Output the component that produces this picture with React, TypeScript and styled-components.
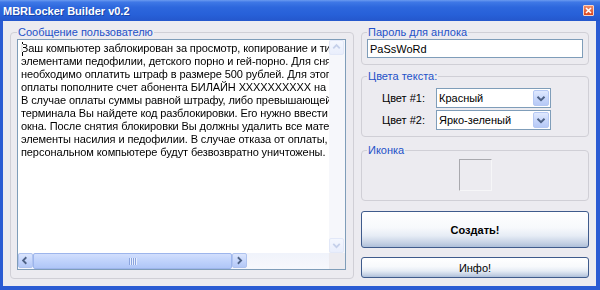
import React from 'react';
import styled, { createGlobalStyle } from 'styled-components';

const messageLines = [
    'Ваш компьютер заблокирован за просмотр, копирование и тиражирование видеоматериалов, содержащих',
    'элементами педофилии, детского порно и гей-порно. Для снятия блокировки Вам',
    'необходимо оплатить штраф в размере 500 рублей. Для этого в ближайшем терминале',
    'оплаты пополните счет абонента БИЛАЙН XXXXXXXXXX на указанную сумму.',
    'В случае оплаты суммы равной штрафу, либо превышающей ее, на фискальном чеке',
    'терминала Вы найдете код разблокировки. Его нужно ввести в специальное поле',
    'окна. После снятия блокировки Вы должны удалить все материалы, содержащие',
    'элементы насилия и педофилии. В случае отказа от оплаты, все данные на Вашем',
    'персональном компьютере будут безвозвратно уничтожены.',
];

const GlobalStyle = createGlobalStyle`
    html, body {
        margin: 0;
        padding: 0;
        background: #ffffff;
    }
    body {
        font-family: "Liberation Sans", Arial, sans-serif;
        font-size: 11px;
    }
    * {
        box-sizing: border-box;
    }
`;

type Dir = 'left' | 'right' | 'up' | 'down';

const arrowPoints: Record<Dir, string> = {
    left: '9,4 5,8 9,12',
    right: '6,4 10,8 6,12',
    up: '4,9 8,5 12,9',
    down: '4,6 8,10 12,6',
};

const Arrow: React.FC<{ dir: Dir; color: string }> = ({ dir, color }) => (
    <svg width="15" height="15" viewBox="0 0 16 16">
        <polyline points={arrowPoints[dir]} fill="none" stroke={color} strokeWidth="2.2" strokeLinejoin="miter" />
    </svg>
);

const App: React.FC = () => {
    return (
        <>
            <GlobalStyle />
            <Window>
                <TitleBar>
                    <Title>MBRLocker Builder v0.2</Title>
                    <CloseButton>
                        <svg width="7" height="7" viewBox="0 0 7 7">
                            <path d="M1 1 L6 6 M6 1 L1 6" stroke="#ffffff" strokeWidth="1.6" />
                        </svg>
                    </CloseButton>
                </TitleBar>
                <Frame>
                    <Body>
                        <MessageGroup>
                            <Legend>Сообщение пользователю</Legend>
                            <TextBox>
                                <TextContent>
                                    <Caret />
                                    {messageLines.join('\n')}
                                </TextContent>
                                <VScroll>
                                    <ScrollButton $disabled>
                                        <Arrow dir="up" color="#C5D0EA" />
                                    </ScrollButton>
                                    <ScrollButton $disabled>
                                        <Arrow dir="down" color="#C5D0EA" />
                                    </ScrollButton>
                                </VScroll>
                                <HScroll>
                                    <ScrollButton>
                                        <Arrow dir="left" color="#4D6185" />
                                    </ScrollButton>
                                    <Thumb>
                                        <Grip />
                                    </Thumb>
                                    <ScrollButton>
                                        <Arrow dir="right" color="#4D6185" />
                                    </ScrollButton>
                                </HScroll>
                                <ScrollCorner />
                            </TextBox>
                        </MessageGroup>
                        <SideColumn>
                            <Group $pad="0 5px 6px 5px">
                                <Legend>Пароль для анлока</Legend>
                                <TextInput defaultValue="PaSsWoRd" />
                            </Group>
                            <Group $pad="5px 5px 6px 5px" $mt={5}>
                                <Legend>Цвета текста:</Legend>
                                <ColorRow>
                                    <RowLabel>Цвет #1:</RowLabel>
                                    <Combo>
                                        <ComboText>Красный</ComboText>
                                        <ComboButton>
                                            <Arrow dir="down" color="#4D6185" />
                                        </ComboButton>
                                    </Combo>
                                </ColorRow>
                                <ColorRow $mt={2}>
                                    <RowLabel>Цвет #2:</RowLabel>
                                    <Combo>
                                        <ComboText>Ярко-зеленый</ComboText>
                                        <ComboButton>
                                            <Arrow dir="down" color="#4D6185" />
                                        </ComboButton>
                                    </Combo>
                                </ColorRow>
                            </Group>
                            <Group $pad="2px 5px 9px 5px" $mt={7}>
                                <Legend>Иконка</Legend>
                                <IconSlot />
                            </Group>
                            <ActionButton $h={37} $mt={10} $bold>Создать!</ActionButton>
                            <ActionButton $h={21} $mt={9}>Инфо!</ActionButton>
                        </SideColumn>
                    </Body>
                </Frame>
            </Window>
        </>
    );
};

const Window = styled.div`
    width: 600px;
    height: 290px;
    display: flex;
    flex-direction: column;
    overflow: hidden;
`;

const TitleBar = styled.div`
    flex: none;
    height: 21px;
    display: flex;
    align-items: center;
    justify-content: space-between;
    padding: 0 6px 0 3px;
    background: linear-gradient(to bottom, #6b9bf0 0%, #3f78e6 10%, #2d67dd 35%, #2760d8 70%, #2457cc 100%);
`;

const Title = styled.span`
    color: #ffffff;
    font-weight: bold;
    font-size: 11px;
    text-shadow: 1px 1px 0 #1a44a8;
`;

const CloseButton = styled.div`
    width: 11px;
    height: 11px;
    display: flex;
    align-items: center;
    justify-content: center;
    background: linear-gradient(to bottom, #ef8a68, #d9461f);
    border: 1px solid #f6d2c4;
    border-radius: 1px;
`;

const Frame = styled.div`
    flex: 1;
    min-height: 0;
    display: flex;
    background: #ECEBF0;
    border-left: 3px solid #2A5BD3;
    border-right: 4px solid #2A5BD3;
    border-bottom: 4px solid #2A5BD3;
`;

const Body = styled.div`
    flex: 1;
    display: flex;
    gap: 7px;
    padding: 5px 7px 7px 7px;
`;

const Group = styled.fieldset<{ $pad: string; $mt?: number }>`
    margin: ${p => p.$mt ?? 0}px 0 0 0;
    min-width: 0;
    border: 1px solid #D0CFD6;
    border-radius: 4px;
    padding: ${p => p.$pad};
`;

const MessageGroup = styled(Group).attrs({ $pad: '0 7px 8px 6px' })`
    width: 344px;
    flex: none;
    display: flex;
    flex-direction: column;
`;

const Legend = styled.legend`
    padding: 0 1px;
    color: #2452C8;
    font-size: 11px;
    line-height: 13px;
`;

const TextBox = styled.div`
    flex: 1;
    min-height: 0;
    display: grid;
    grid-template-columns: 1fr 16px;
    grid-template-rows: 1fr 16px;
    border: 1px solid #7F9DB9;
    background: #ffffff;
`;

const TextContent = styled.div`
    position: relative;
    isolation: isolate;
    overflow: hidden;
    white-space: pre;
    padding: 2px 0 0 3px;
    background: #ffffff;
    color: #000000;
    font-size: 11px;
    line-height: 13px;
    letter-spacing: -0.1px;
`;

const Caret = styled.span`
    position: absolute;
    left: 4px;
    top: 2px;
    width: 1px;
    height: 14px;
    background: #ffffff;
    mix-blend-mode: difference;
`;

const VScroll = styled.div`
    display: flex;
    flex-direction: column;
    justify-content: space-between;
    background: #F6F7FB;
    padding: 0 1px 0 0;
`;

const HScroll = styled.div`
    display: flex;
    background: linear-gradient(to bottom, #F0F3FB, #F7F8FC);
`;

const ScrollCorner = styled.div`
    background: #ECEBF0;
`;

const ScrollButton = styled.div<{ $disabled?: boolean }>`
    width: 15px;
    height: 15px;
    flex: none;
    display: flex;
    align-items: center;
    justify-content: center;
    border-radius: 2px;
    border: 1px solid ${p => (p.$disabled ? '#E2E8F8' : '#AFC3EF')};
    background: ${p => p.$disabled
        ? 'linear-gradient(to bottom, #F4F7FE, #E9EEFC)'
        : 'linear-gradient(to bottom, #DCE6FD, #C2D3FB 60%, #B4C8F6)'};
`;

const Thumb = styled.div`
    width: 199px;
    flex: none;
    display: flex;
    align-items: center;
    justify-content: center;
    border: 1px solid #9DB5EC;
    border-radius: 2px;
    background: linear-gradient(to bottom, #D2DFFD, #BFD2FB 50%, #AFC6F7);
`;

const Grip = styled.div`
    width: 8px;
    height: 7px;
    background: repeating-linear-gradient(to right, #8AA4DE 0 1px, #E8EEFD 1px 2px);
`;

const SideColumn = styled.div`
    flex: 1;
    min-width: 0;
    display: flex;
    flex-direction: column;
`;

const TextInput = styled.input`
    display: block;
    width: 100%;
    height: 19px;
    margin: 0;
    padding: 0 2px;
    border: 1px solid #7F9DB9;
    background: #ffffff;
    font-family: inherit;
    font-size: 11px;
    color: #000000;
    outline: none;
`;

const ColorRow = styled.div<{ $mt?: number }>`
    display: flex;
    align-items: center;
    margin-top: ${p => p.$mt ?? 0}px;
`;

const RowLabel = styled.span`
    width: 69px;
    flex: none;
    padding-left: 15px;
    color: #000000;
    font-size: 11px;
`;

const Combo = styled.div`
    width: 115px;
    height: 20px;
    display: flex;
    align-items: center;
    justify-content: space-between;
    border: 1px solid #7F9DB9;
    background: #ffffff;
    padding: 1px;
`;

const ComboText = styled.span`
    padding-left: 1px;
    color: #000000;
    font-size: 11px;
`;

const ComboButton = styled.div`
    width: 16px;
    height: 16px;
    display: flex;
    align-items: center;
    justify-content: center;
    border: 1px solid #B5C8F3;
    border-radius: 2px;
    background: linear-gradient(to bottom, #E0E9FE, #C4D4FA 60%, #B6C9F6);
`;

const IconSlot = styled.div`
    width: 33px;
    height: 32px;
    margin: 0 auto;
    border: 1px solid;
    border-color: #A9A9AE #F6F6F8 #F6F6F8 #A9A9AE;
`;

const ActionButton = styled.button<{ $h: number; $mt: number; $bold?: boolean }>`
    flex: none;
    width: 100%;
    height: ${p => p.$h}px;
    margin: ${p => p.$mt}px 0 0 0;
    padding: 0;
    border: 1px solid #3F5B8C;
    border-radius: 3px;
    background: linear-gradient(to bottom, #ffffff 0%, #f7f9fc 45%, #e6ecf5 68%, #c6d2e5 88%, #aebfd9 100%);
    font-family: inherit;
    font-size: 11px;
    font-weight: ${p => (p.$bold ? 'bold' : 'normal')};
    color: #000000;
`;

export default App;
